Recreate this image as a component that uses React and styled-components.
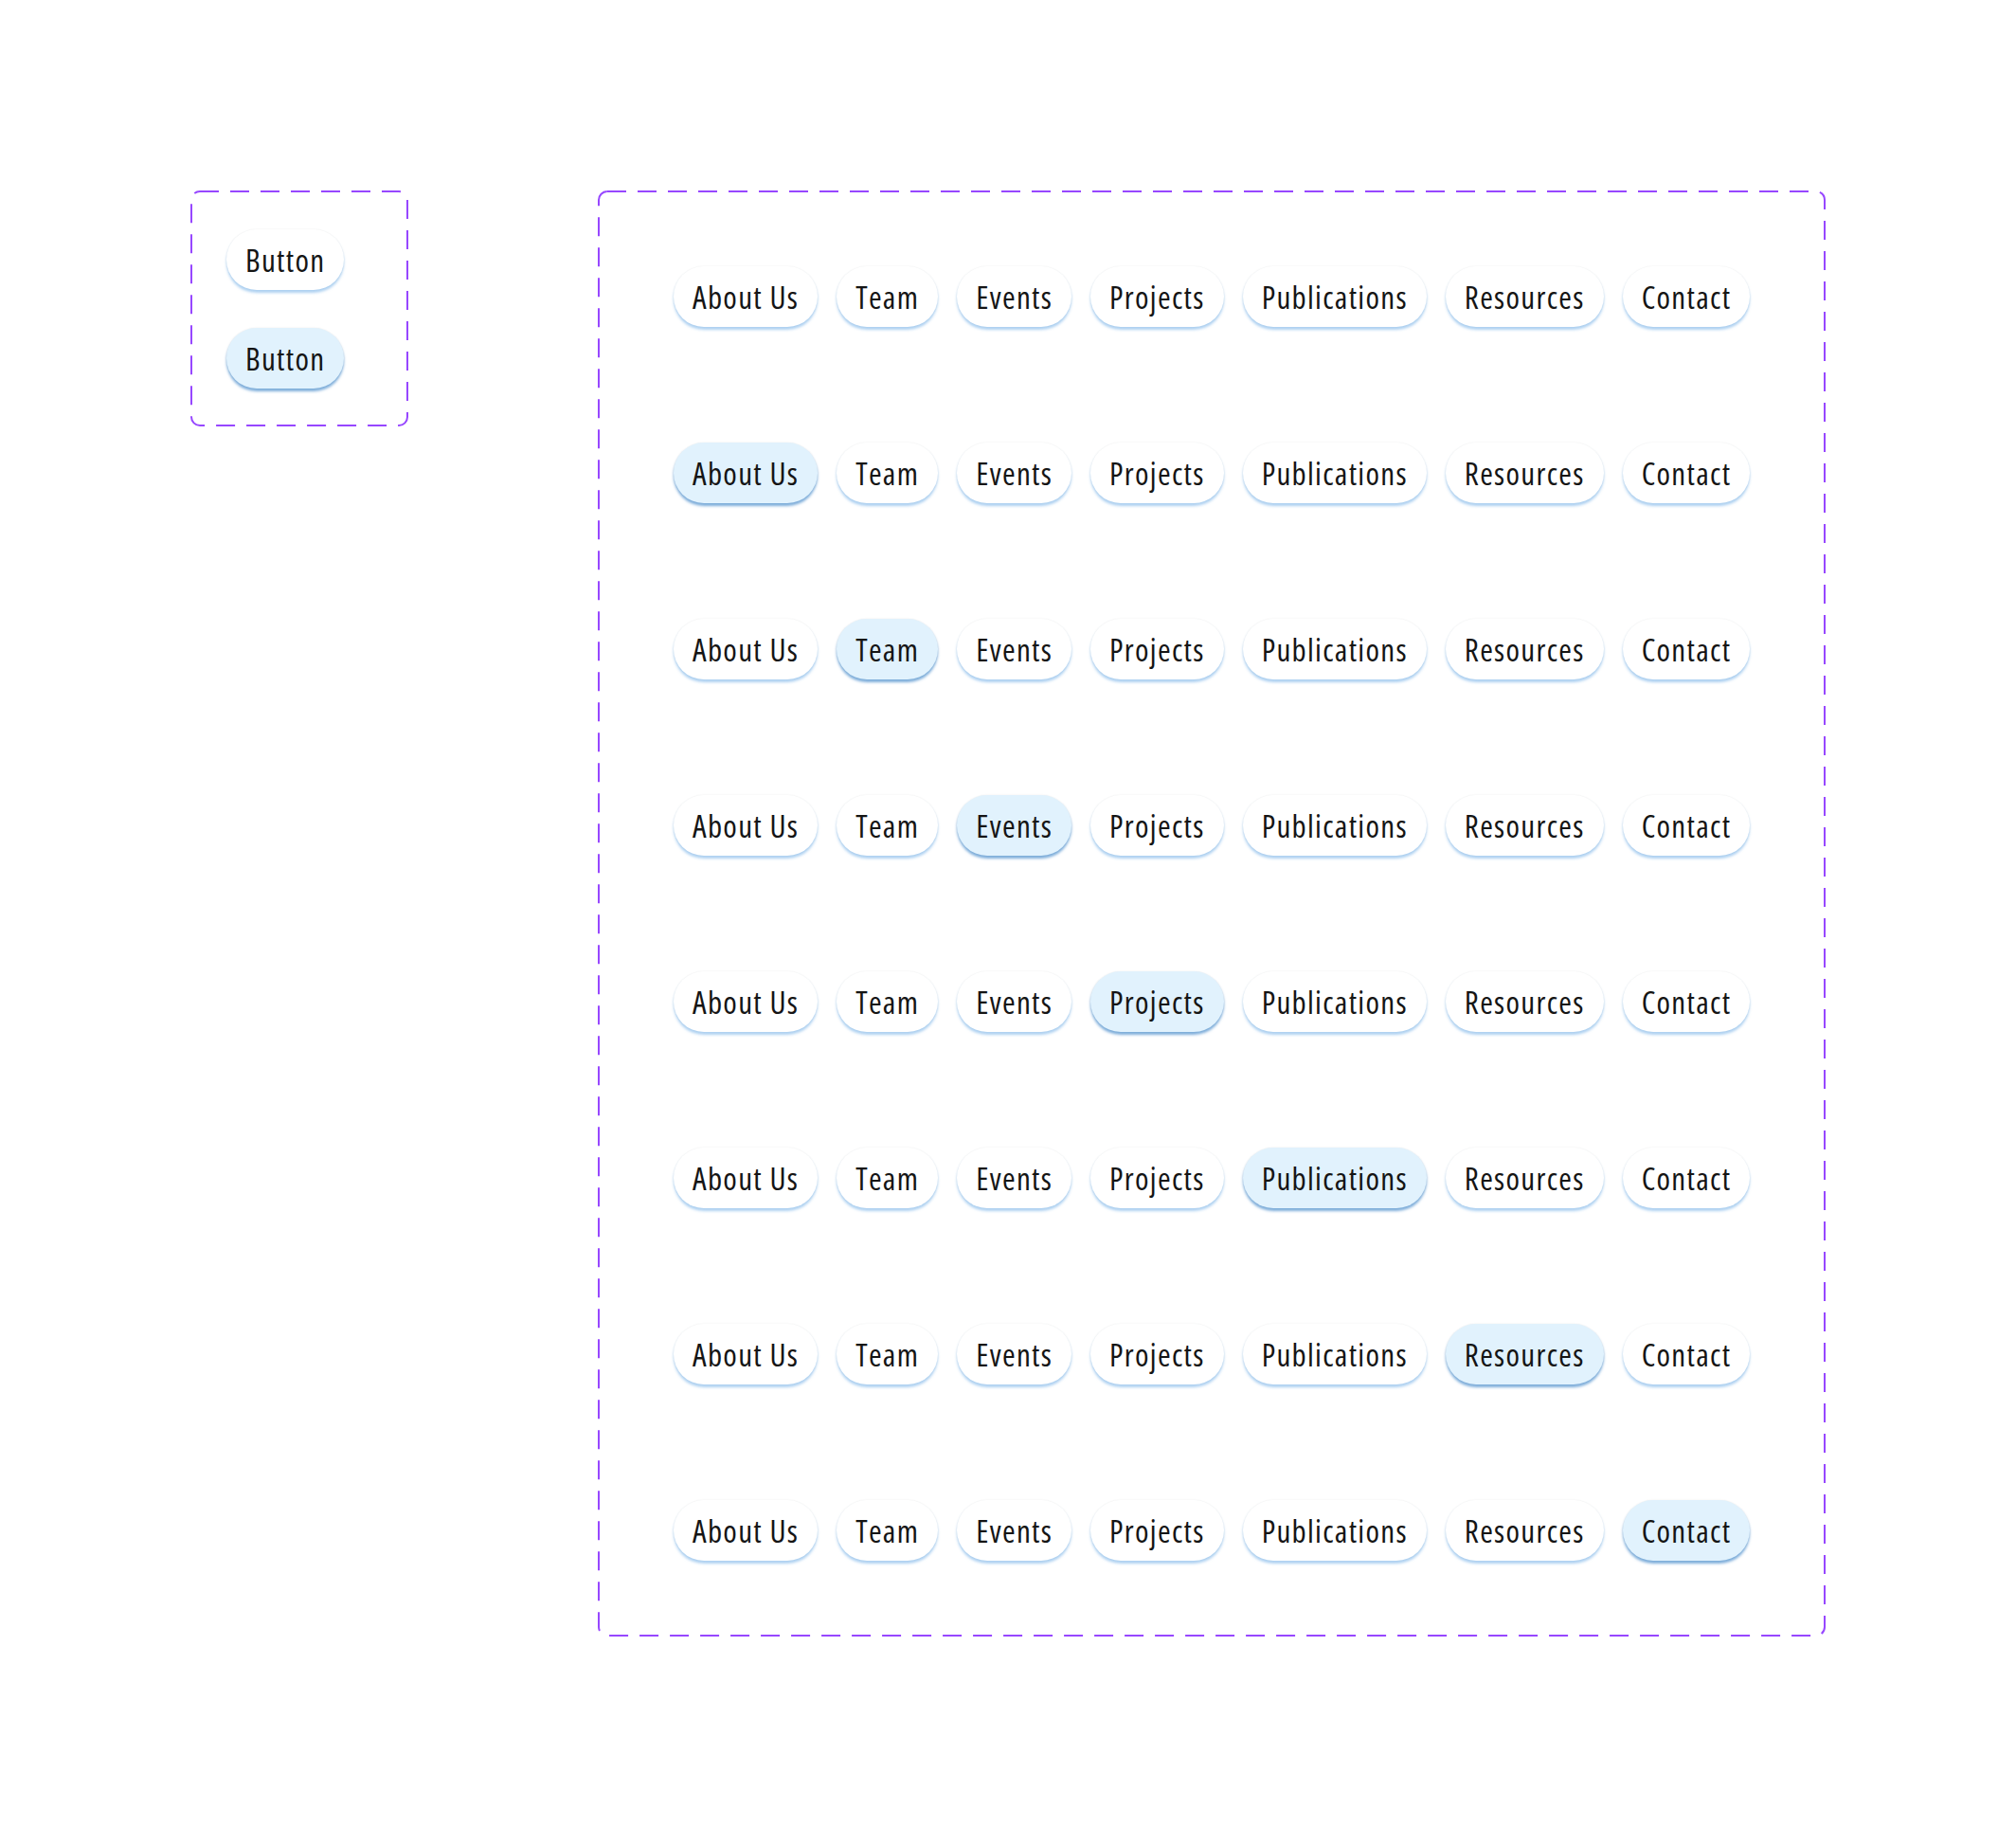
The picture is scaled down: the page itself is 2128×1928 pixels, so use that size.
import React from "react"
import styled, { createGlobalStyle } from "styled-components"

const GlobalStyle = createGlobalStyle`
  body {
    margin: 0;
    background: #ffffff;
    font-family: "Open Sans", "DejaVu Sans Condensed", sans-serif;
  }
`

const Page = styled.div`
  display: flex;
  align-items: flex-start;
  gap: 200px;
  padding: 201px 0 200px 201px;
  box-sizing: border-box;
`

const Frame = styled.div`
  position: relative;
  box-sizing: border-box;
  padding: ${(p) => p.$pad};
  width: ${(p) => p.$width}px;
`

// dashed outline of a component set
const DashedEdge = () => (
  <svg
    width="100%"
    height="100%"
    style={{ position: "absolute", inset: 0, overflow: "visible", pointerEvents: "none" }}
  >
    <rect
      x="1"
      y="1"
      width="calc(100% - 2px)"
      height="calc(100% - 2px)"
      rx="9"
      fill="none"
      stroke="#9747FF"
      strokeWidth="2"
      strokeDasharray="20 12"
    />
  </svg>
)

const Stack = styled.div`
  display: flex;
  flex-direction: column;
  align-items: flex-start;
  gap: ${(p) => p.$gap}px;
`

const Row = styled.div`
  display: flex;
  gap: 20px;
`

const Pill = styled.div`
  height: 64px;
  padding: 0 20px;
  border-radius: 32px;
  display: flex;
  align-items: center;
  font-size: 33px;
  font-stretch: 75%;
  font-weight: 400;
  letter-spacing: 1.3px;
  color: #151515;
  white-space: nowrap;
  background: ${(p) => (p.$active ? "#E1F2FD" : "#FFFFFF")};
  box-shadow: ${(p) =>
    p.$active
      ? "0 3px 3px rgba(82, 146, 206, 0.75), 0 0 2px rgba(0, 0, 0, 0.08)"
      : "0 3px 3px rgba(140, 190, 235, 0.7), 0 0 2px rgba(0, 0, 0, 0.08)"};
`

const items = ["About Us", "Team", "Events", "Projects", "Publications", "Resources", "Contact"]

export default function App() {
  return (
    <>
      <GlobalStyle />
      <Page>
        <Frame $width={230} $pad="41px 38px 40px">
          <DashedEdge />
          <Stack $gap={40}>
            <Pill>Button</Pill>
            <Pill $active>Button</Pill>
          </Stack>
        </Frame>
        <Frame $width={1296} $pad="80px">
          <DashedEdge />
          <Stack $gap={122}>
            {[-1, 0, 1, 2, 3, 4, 5, 6].map((active) => (
              <Row key={active}>
                {items.map((label, i) => (
                  <Pill key={label} $active={i === active}>
                    {label}
                  </Pill>
                ))}
              </Row>
            ))}
          </Stack>
        </Frame>
      </Page>
    </>
  )
}
